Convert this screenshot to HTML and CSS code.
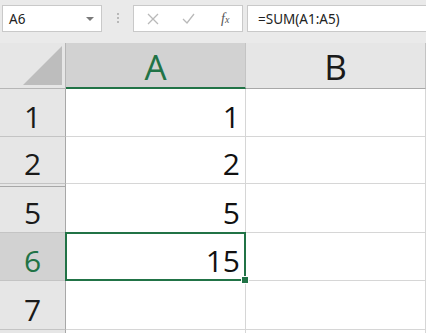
FILE: index.html
```html
<!DOCTYPE html>
<html lang="zh">
<head>
  <meta charset="UTF-8">
  <title>SUM</title>
  <link rel="stylesheet" href="styles.css">
</head>
<body>
  <div class="formula-bar">
    <div class="name-box">
      <span>A6</span>
      <span class="caret"></span>
    </div>
    <div class="grip"><i></i><i></i><i></i></div>
    <div class="fn-box">
      <svg class="tool" width="12" height="12" viewBox="0 0 12 12">
        <path d="M1 1 L11 11 M11 1 L1 11" stroke="#b9b9b9" stroke-width="1.3" fill="none"/>
      </svg>
      <svg class="tool" width="13" height="11" viewBox="0 0 13 11">
        <path d="M1 6 L5 10 L12 1" stroke="#b9b9b9" stroke-width="1.3" fill="none"/>
      </svg>
      <span class="fx">f<sub>x</sub></span>
    </div>
    <div class="formula">=SUM(A1:A5)</div>
  </div>

  <div class="sheet">
    <div class="corner">
      <svg width="39" height="39" viewBox="0 0 39 39">
        <polygon points="39,0 39,39 0,39" fill="#bdbdbd"/>
      </svg>
    </div>
    <div class="col-head active">A</div>
    <div class="col-head">B</div>

    <div class="row-head">1</div>
    <div class="cell num">1</div>
    <div class="cell"></div>

    <div class="row-head">2</div>
    <div class="cell num">2</div>
    <div class="cell"></div>

    <div class="hidden-row head"></div>
    <div class="hidden-row"></div>
    <div class="hidden-row"></div>

    <div class="row-head">5</div>
    <div class="cell num">5</div>
    <div class="cell"></div>

    <div class="row-head active">6</div>
    <div class="cell num selected">15</div>
    <div class="cell"></div>

    <div class="row-head">7</div>
    <div class="cell num"></div>
    <div class="cell"></div>

    <div class="row-head"></div>
    <div class="cell"></div>
    <div class="cell"></div>
  </div>
</body>
</html>
```

FILE: styles.css
```css
* {
  box-sizing: border-box;
  margin: 0;
  padding: 0;
}

body {
  width: 426px;
  height: 333px;
  overflow: hidden;
  background: #e9e9e9;
  font-family: 'Noto Sans', 'Noto Sans CJK SC', sans-serif;
}

/* formula bar */
.formula-bar {
  height: 43px;
  display: flex;
  align-items: flex-start;
  padding: 5px 0 0 2px;
  background: #eaeaea;
}

.name-box, .fn-box, .formula {
  height: 27px;
  background: #fff;
  border: 1px solid #c9c9c9;
  display: flex;
  align-items: center;
}

.name-box {
  width: 100px;
  padding: 0 6px 0 6px;
  justify-content: space-between;
  font-size: 13.5px;
  color: #222;
}

.caret {
  width: 0;
  height: 0;
  border-left: 4px solid transparent;
  border-right: 4px solid transparent;
  border-top: 4px solid #7a7a7a;
  margin-right: 1px;
}

.grip {
  width: 31px;
  display: flex;
  flex-direction: column;
  align-items: center;
  gap: 2px;
  padding-top: 8px;
}

.grip i {
  width: 2px;
  height: 2px;
  background: #b8b8b8;
}

.fn-box {
  width: 110px;
  padding-left: 13px;
}

.fn-box .tool:nth-child(2) {
  margin-left: 23px;
}

.fx {
  margin-left: 26px;
  font-family: 'Liberation Serif', serif;
  font-style: italic;
  font-size: 14px;
  color: #555;
}

.fx sub {
  font-size: 10px;
  vertical-align: 0;
}

.formula {
  flex: 1;
  margin-left: 4px;
  margin-right: -2px;
  padding-left: 10px;
  font-size: 13.5px;
  color: #222;
}

/* grid */
.sheet {
  display: grid;
  grid-template-columns: 66px 180px 180px;
  grid-template-rows: 46px 48px 47px 3px 46px 48px 49px 3px;
  font-family: 'Open Sans', sans-serif;
  background: #fff;
}

.corner, .col-head, .row-head {
  background: #e6e6e6;
  color: #1a1a1a;
}

.corner {
  border-right: 1px solid #b6b6b6;
  border-bottom: 1px solid #b6b6b6;
  display: flex;
  justify-content: flex-end;
  align-items: flex-end;
  padding: 0 3px 3px 0;
}

.col-head {
  border-right: 1px solid #c4c4c4;
  border-bottom: 1px solid #a8a8a8;
  display: flex;
  justify-content: center;
  align-items: flex-end;
  font-size: 35px;
  line-height: 35px;
  padding-bottom: 4px;
}

.col-head.active {
  background: #d2d2d2;
  color: #217346;
  border-bottom: 2px solid #217346;
  padding-bottom: 3px;
}

.row-head {
  border-right: 1px solid #a8a8a8;
  border-bottom: 1px solid #c4c4c4;
  display: flex;
  justify-content: center;
  align-items: flex-end;
  font-size: 30px;
  line-height: 30px;
  padding-bottom: 4px;
  overflow: hidden;
}

.row-head.active {
  background: #d2d2d2;
  color: #217346;
}

.cell {
  border-right: 1px solid #d6d6d6;
  border-bottom: 1px solid #d6d6d6;
  display: flex;
  justify-content: flex-end;
  align-items: flex-end;
  font-size: 30px;
  line-height: 30px;
  padding: 0 5px 4px 0;
  color: #111;
  overflow: hidden;
}

.hidden-row {
  border-right: 1px solid #d6d6d6;
}

.hidden-row.head {
  background: #e6e6e6;
  border-bottom: 1px solid #a8a8a8;
  border-right: 1px solid #a8a8a8;
}

.cell.selected {
  position: relative;
  overflow: visible;
  border: 2px solid #217346;
  margin: -1px 0 0 -1px;
  padding: 0 4px 3px 0;
}

.cell.selected::after {
  content: "";
  position: absolute;
  right: -5px;
  bottom: -5px;
  width: 6px;
  height: 6px;
  background: #217346;
  border: 1px solid #fff;
}
```
